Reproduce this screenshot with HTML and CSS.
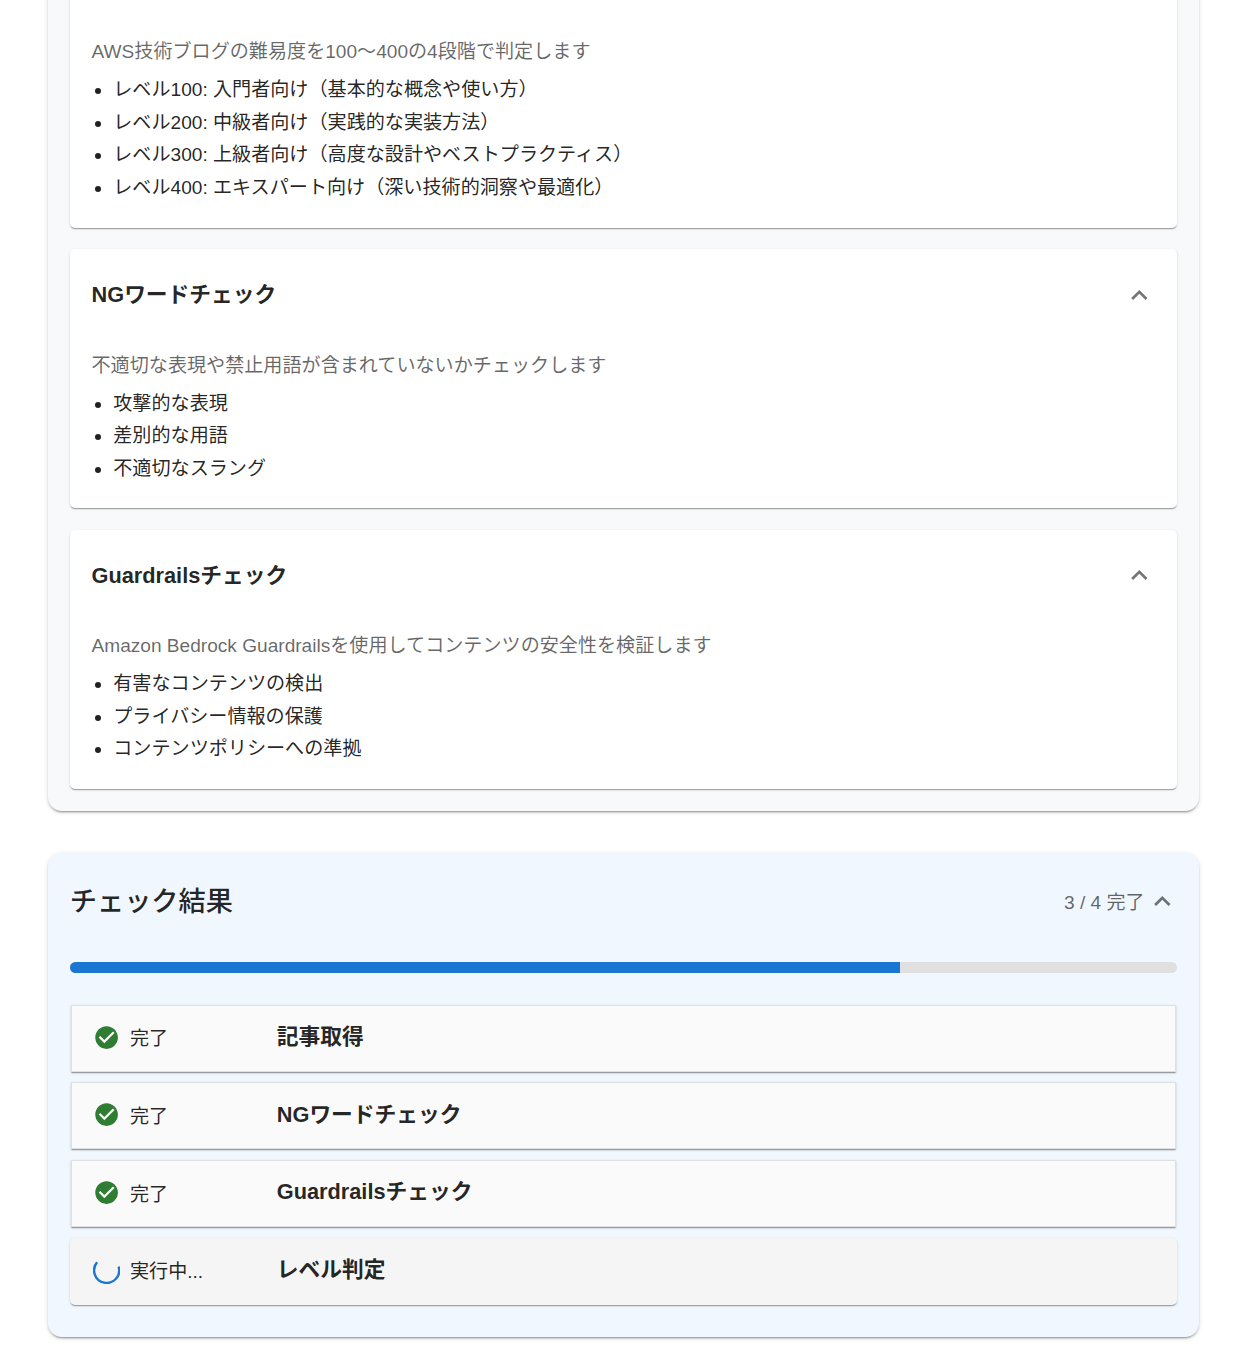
FILE: index.html
```html
<!DOCTYPE html>
<html lang="ja">
<head>
<meta charset="utf-8">
<title>チェック結果</title>
<link rel="stylesheet" href="styles.css">
</head>
<body>
<main class="page">
  <section class="panel panel-info">
    <article class="card card-first">
      <p class="desc">AWS技術ブログの難易度を100〜400の4段階で判定します</p>
      <ul class="list">
        <li>レベル100: 入門者向け（基本的な概念や使い方）</li>
        <li>レベル200: 中級者向け（実践的な実装方法）</li>
        <li>レベル300: 上級者向け（高度な設計やベストプラクティス）</li>
        <li>レベル400: エキスパート向け（深い技術的洞察や最適化）</li>
      </ul>
    </article>
    <article class="card">
      <header class="card-head">
        <h3 class="card-title">NGワードチェック</h3>
        <svg class="chev" viewBox="0 0 24 24"><path d="M12 8l-6 6 1.41 1.41L12 10.83l4.59 4.58L18 14z"/></svg>
      </header>
      <p class="desc">不適切な表現や禁止用語が含まれていないかチェックします</p>
      <ul class="list">
        <li>攻撃的な表現</li>
        <li>差別的な用語</li>
        <li>不適切なスラング</li>
      </ul>
    </article>
    <article class="card">
      <header class="card-head">
        <h3 class="card-title">Guardrailsチェック</h3>
        <svg class="chev" viewBox="0 0 24 24"><path d="M12 8l-6 6 1.41 1.41L12 10.83l4.59 4.58L18 14z"/></svg>
      </header>
      <p class="desc">Amazon Bedrock Guardrailsを使用してコンテンツの安全性を検証します</p>
      <ul class="list">
        <li>有害なコンテンツの検出</li>
        <li>プライバシー情報の保護</li>
        <li>コンテンツポリシーへの準拠</li>
      </ul>
    </article>
  </section>

  <section class="panel panel-result">
    <header class="result-head">
      <h2 class="result-title">チェック結果</h2>
      <div class="result-meta">
        <span class="result-count">3 / 4 完了</span>
        <svg class="chev chev-meta" viewBox="0 0 24 24"><path d="M12 8l-6 6 1.41 1.41L12 10.83l4.59 4.58L18 14z"/></svg>
      </div>
    </header>
    <div class="progress"><div class="progress-bar" style="width:75%"></div></div>
    <div class="rows">
      <div class="row">
        <div class="status"><svg class="check" viewBox="0 0 24 24"><path d="M12 2C6.48 2 2 6.48 2 12s4.48 10 10 10 10-4.48 10-10S17.52 2 12 2zm-2 15l-5-5 1.41-1.41L10 14.17l7.59-7.59L19 8l-9 9z"/></svg><span>完了</span></div>
        <div class="row-name">記事取得</div>
      </div>
      <div class="row">
        <div class="status"><svg class="check" viewBox="0 0 24 24"><path d="M12 2C6.48 2 2 6.48 2 12s4.48 10 10 10 10-4.48 10-10S17.52 2 12 2zm-2 15l-5-5 1.41-1.41L10 14.17l7.59-7.59L19 8l-9 9z"/></svg><span>完了</span></div>
        <div class="row-name">NGワードチェック</div>
      </div>
      <div class="row">
        <div class="status"><svg class="check" viewBox="0 0 24 24"><path d="M12 2C6.48 2 2 6.48 2 12s4.48 10 10 10 10-4.48 10-10S17.52 2 12 2zm-2 15l-5-5 1.41-1.41L10 14.17l7.59-7.59L19 8l-9 9z"/></svg><span>完了</span></div>
        <div class="row-name">Guardrailsチェック</div>
      </div>
      <div class="row row-active">
        <div class="status"><svg class="spinner" viewBox="0 0 28 28"><path d="M4.2 5.5A12.9 12.9 0 1 0 26.4 10"/></svg><span>実行中...</span></div>
        <div class="row-name">レベル判定</div>
      </div>
    </div>
  </section>
</main>
</body>
</html>
```
FILE: styles.css
```css
* { box-sizing: border-box; }
html, body { margin: 0; padding: 0; background: #fff; }
body {
  font-family: "Liberation Sans", "Noto Sans CJK JP", sans-serif;
  color: rgba(0, 0, 0, 0.87);
  height: 1366px;
  overflow: hidden;
}
.page {
  display: flex;
  flex-direction: column;
  gap: 42px;
  padding: 0 40px 0 48px;
  margin-top: -40px;
}
.panel {
  border-radius: 14px;
  padding: 20px 21.76px 22.4px;
  box-shadow: 0 3px 1px -2px rgba(0,0,0,.2), 0 2px 2px rgba(0,0,0,.14), 0 1px 5px rgba(0,0,0,.12);
}
.panel-info {
  background: #f8f9fa;
  display: flex;
  flex-direction: column;
  gap: 21.76px;
}
.panel-result {
  background: #f0f7ff;
  padding: 0 21.76px 32.5px;
}
.card {
  background: #fff;
  border-radius: 5px;
  padding: 0 21.76px 23.1px;
  box-shadow: 0 2px 1px -1px rgba(0,0,0,.2), 0 1px 1px rgba(0,0,0,.14), 0 1px 3px rgba(0,0,0,.12);
}
.card-first { padding-top: 57.9px; padding-bottom: 23.5px; }
.card-first .desc { margin-bottom: 8.1px; }
.card-head {
  height: 102.5px;
  display: flex;
  align-items: center;
  justify-content: space-between;
  padding-bottom: 11px;
}
.card-title {
  margin: 0;
  font-size: 21.76px;
  font-weight: 700;
  line-height: 1.3;
}
.chev {
  width: 32.64px;
  height: 32.64px;
  fill: rgba(0, 0, 0, 0.54);
  flex: none;
}
.desc {
  margin: 0 0 7.5px;
  font-size: 19.1px;
  line-height: 28.5px;
  color: rgba(0, 0, 0, 0.6);
}
.list {
  margin: 0;
  padding: 0 0 0 21.76px;
  font-size: 19.1px;
  line-height: 32.4px;
}
.result-head {
  height: 98px;
  display: flex;
  align-items: center;
  justify-content: space-between;
  padding-bottom: 1px;
}
.result-title {
  margin: 0;
  font-size: 27.2px;
  font-weight: 500;
  line-height: 1.3;
}
.result-meta {
  display: flex;
  align-items: center;
  gap: 1px;
  margin-right: -1px;
  padding-bottom: 1px;
}
.result-count {
  font-size: 19.1px;
  color: rgba(0, 0, 0, 0.6);
}
.progress {
  height: 11px;
  margin-top: 11px;
  border-radius: 6px;
  background: #e0e0e0;
  overflow: hidden;
}
.progress-bar { height: 100%; background: #1976d2; }
.rows {
  display: flex;
  flex-direction: column;
  gap: 10.6px;
  margin-top: 31.7px;
}
.row {
  height: 67px;
  margin: 0 1px;
  display: flex;
  align-items: center;
  padding: 0 0 2px 22px;
  background: #fafafa;
  border: 1px solid #e0e0e0;
  box-shadow: 0 2px 1px -1px rgba(0,0,0,.2), 0 1px 1px rgba(0,0,0,.14), 0 1px 3px rgba(0,0,0,.12);
}
.row-active {
  margin: 0;
  padding-left: 24px;
  background: #f5f5f5;
  border: 0;
  border-radius: 5px;
}
.status {
  width: 183px;
  display: flex;
  align-items: center;
  gap: 10px;
  font-size: 19.1px;
}
.check {
  width: 27.2px;
  height: 27.2px;
  fill: #2e7d32;
  flex: none;
  margin-left: -1px;
}
.spinner {
  width: 27.2px;
  height: 27.2px;
  fill: none;
  stroke: #1976d2;
  stroke-width: 2.5;
  flex: none;
  margin-left: -1px;
}
.row-name {
  font-size: 21.76px;
  font-weight: 700;
  line-height: 1.3;
}
```
